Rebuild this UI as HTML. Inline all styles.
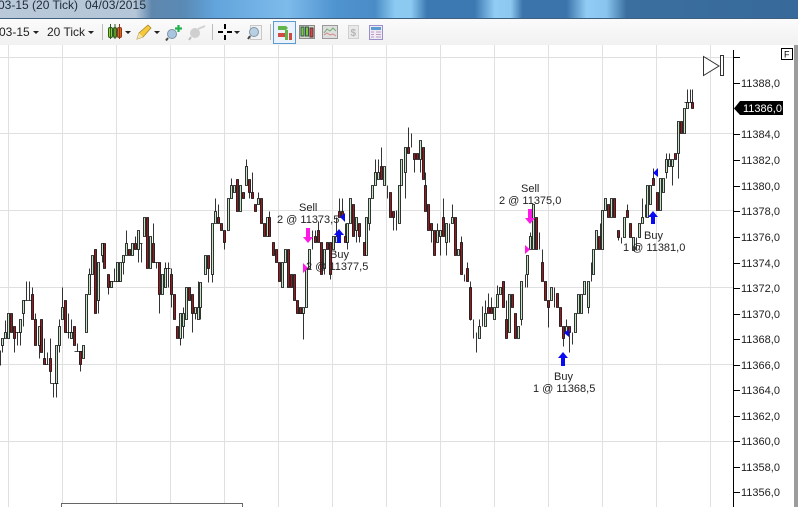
<!DOCTYPE html>
<html>
<head>
<meta charset="utf-8">
<style>
html,body{margin:0;padding:0;background:#fff}
body{width:798px;height:507px;overflow:hidden;position:relative;font-family:"Liberation Sans",sans-serif}
svg{position:absolute;left:0;top:0}
text{font-family:"Liberation Sans",sans-serif}
</style>
</head>
<body>
<svg width="798" height="507" viewBox="0 0 798 507">
<defs>
<linearGradient id="tb" x1="0" x2="1" y1="0" y2="0">
<stop offset="0" stop-color="#b9c9d9"/>
<stop offset=".17" stop-color="#b4c6d8"/>
<stop offset=".19" stop-color="#5f87ad"/>
<stop offset=".23" stop-color="#5a8ab5"/>
<stop offset=".27" stop-color="#62a4dc"/>
<stop offset=".36" stop-color="#7dbbea"/>
<stop offset=".42" stop-color="#4f93cf"/>
<stop offset=".47" stop-color="#4a8cc6"/>
<stop offset=".495" stop-color="#8ccaf2"/>
<stop offset=".515" stop-color="#8ccaf2"/>
<stop offset=".535" stop-color="#3c78b2"/>
<stop offset=".595" stop-color="#3c78b2"/>
<stop offset=".62" stop-color="#90ccf4"/>
<stop offset=".64" stop-color="#8cc8f0"/>
<stop offset=".655" stop-color="#3b74aa"/>
<stop offset=".71" stop-color="#3b74aa"/>
<stop offset=".735" stop-color="#90ccf4"/>
<stop offset=".76" stop-color="#88c4ee"/>
<stop offset=".785" stop-color="#3b6f9f"/>
<stop offset="1" stop-color="#376a9a"/>
</linearGradient>
<linearGradient id="tool" x1="0" x2="0" y1="0" y2="1">
<stop offset="0" stop-color="#fbfbfb"/><stop offset="1" stop-color="#f1f1f1"/>
</linearGradient>
</defs>

<rect width="798" height="18" fill="url(#tb)"/>
<rect y="18" width="798" height="1" fill="#3f5f7f"/>
<text x="-2" y="9" font-size="12" fill="#1e2a36" textLength="80">03-15 (20 Tick)</text>
<text x="85" y="9" font-size="12" fill="#1e2a36" textLength="61">04/03/2015</text>

<rect y="19" width="798" height="26" fill="url(#tool)"/>
<text x="-1" y="36" font-size="12" fill="#222">03-15</text>
<path d="M33 31h6l-3 3z M88 31h6l-3 3z M125 31h6l-3 3z M154 31h6l-3 3z M234 31h6l-3 3z" fill="#222"/>
<text x="47" y="36" font-size="12" fill="#222">20 Tick</text>
<path d="M102.500 24v16M212.500 24v16M270.500 24v16" stroke="#bcbcbc"/>

<!-- candle icon -->
<g stroke="#2d5a1e" stroke-width="1">
<rect x="108.500" y="27.500" width="4" height="10" rx="1.500" fill="#8fd13f"/>
<rect x="113.500" y="27.500" width="3" height="10" rx="1.500" fill="#8fd13f"/>
<rect x="117.500" y="27.500" width="4" height="10" rx="1.500" fill="#e0602a" stroke="#8a3a16"/>
<path d="M110.500 24v15M115 24v15" fill="none"/><path d="M119.500 24v15" stroke="#8a3a16"/>
</g>
<!-- pencil -->
<path d="M137 39l2-6 9-8 3 3-8 9z" fill="#f5c93a" stroke="#a8862a" stroke-width=".8"/>
<path d="M137 39l2-6 4 4z" fill="#f3e2b0"/>
<!-- magnifier plus -->
<circle cx="172" cy="34" r="4.500" fill="#a9c6de" stroke="#7c92a8"/>
<path d="M168 38l-2 2.500" stroke="#4a4a4a" stroke-width="2"/>
<path d="M178.500 25v7M175 28.500h7" stroke="#22b14c" stroke-width="2.200"/>
<!-- plug grey -->
<circle cx="195" cy="33" r="5" fill="#cfcfcf"/>
<path d="M191 37l-2 3" stroke="#bdbdbd" stroke-width="2"/>
<path d="M198 29l7-3" stroke="#d2d2d2" stroke-width="2"/>
<!-- crosshair -->
<path d="M218 32h5M227 32h5M225 24v5M225 35v5" stroke="#000" stroke-width="2"/>
<!-- magnifier box -->
<rect x="250.500" y="25.500" width="11" height="14" fill="#f2f2f2" stroke="#c8c8c8"/>
<circle cx="254" cy="32" r="4.500" fill="#b9d0e3" stroke="#7f94a8"/>
<path d="M250 36l-2 3" stroke="#444" stroke-width="2"/>
<!-- selected button -->
<rect x="273.500" y="21.500" width="22" height="22" fill="#eaf3fb" stroke="#5b9bd0"/>
<path d="M278 26h8l2 2-2 2h-8z" fill="#62b34a"/>
<path d="M278 33h7l2 2-2 2h-7z" fill="#cf4a44"/>
<rect x="285" y="30" width="3" height="10" fill="#62b34a"/>
<rect x="289" y="33" width="3" height="7" fill="#cf4a44"/>
<!-- candles 2 -->
<rect x="299.500" y="25.500" width="15" height="13" fill="#d9d9c9" stroke="#8a8a8a"/>
<rect x="301" y="27" width="3" height="9" fill="#7ec83f" stroke="#355"/>
<rect x="305.500" y="27" width="3" height="9" fill="#7ec83f" stroke="#355"/>
<rect x="310" y="28" width="3" height="9" fill="#d8484a" stroke="#533"/>
<!-- chart -->
<rect x="322.500" y="25.500" width="15" height="13" fill="#dedede" stroke="#9a9a9a"/>
<path d="M324 33l3-4 3 2 3-3 3 3" fill="none" stroke="#6fae6f"/>
<path d="M324 35l3-2 3 2 3-1 3 2" fill="none" stroke="#d08a8a"/>
<!-- $ doc -->
<rect x="348.500" y="25.500" width="10" height="13" fill="#e9e9e9" stroke="#cfcfcf"/>
<text x="350.500" y="36" font-size="10" font-weight="bold" fill="#b5b5b5">$</text>
<!-- window -->
<rect x="369.500" y="25.500" width="13" height="14" fill="#eeeaf6" stroke="#9a90c8"/>
<rect x="371" y="27" width="10" height="3" fill="#5d9bd0"/>
<path d="M371 32h3M371 34.500h3M371 37h3M376 32h5M376 34.500h5M376 37h5" stroke="#c09ac0"/>

<!-- grid -->
<g stroke="#e0e0e0">
<path d="M8.500 45V507M62.500 45V507M116.500 45V507M170.500 45V507M224.500 45V507M278.500 45V507M332.500 45V507M386.500 45V507M440.500 45V507M494.500 45V507M548.500 45V507M602.500 45V507M656.500 45V507M710.500 45V507"/>
<path d="M0 57.500H733M0 133.500H733M0 210.500H733M0 287.500H733M0 364.500H733M0 441.500H733"/>
</g>

<!-- candles -->
<g transform="translate(.5 .5)" stroke="#111" stroke-width=".85">
<path fill="none" d="M0 350V365M2 338V352M5 320V338M14 338V352M17 332V345M20 332V345M15 332h5M23 313V326M26 281V300M29 281V300M23 300h8M32 287V294M35 313V319M39 345V358M47 352V364M44 338V358M44 364h4M50 338V383M53 383V397M56 383V397M50 383h8M59 319V352M62 287V307M68 313V338M65 332h10M71 319V332M77 343V351M74 351h8M80 364V371M89 268V274M92 255V274M98 300V313M102 255V262M108 287V294M114 268V281M108 281h12M123 262V274M126 230V243M135 236V243M138 249V262M141 243V262M138 243h4M153 223V243M156 262V268M153 262h5M159 294V313M165 262V268M168 262V287M165 268h5M171 268V274M171 294V307M180 338V345M183 307V338M192 313V332M195 313V319M198 281V307M200 307V319M208 268V282M212 274V282M215 198V211M218 204V217M224 242V249M231 178V185M246 159V166M249 192V198M252 172V192M258 192V198M269 211V217M303 313V339M297 313h6M312 230V249M315 230V236M318 221V230M324 268V274M336 217V236M339 198V211M342 198V211M345 223V236M347 242V249M356 230V242M359 236V242M330 274V279M369 223V230M375 159V172M378 159V172M381 147V166M384 166V172M387 185V198M393 217V230M396 210V230M405 172V198M408 127V147M411 133V147M414 159V172M420 159V172M425 172V185M431 230V242M437 223V230M440 236V255M443 198V217M446 242V255M449 223V242M452 204V217M461 236V242M464 274V281M467 262V268M470 281V320M473 319V338M476 332V352M479 319V326M482 326V306M485 300V313M488 293V308M491 297V307M497 285V294M506 300V319M521 319V325M525 274V287M527 274V287M530 232V236M533 204V249M539 232V249M542 249V262M548 307V327M554 287V307M563 338V346M566 319V332M569 332V352M572 332V344M588 307V313M591 262V281M600 223V236M618 237V240M621 237V243M627 204V210M636 237V250M642 198V217M645 204V217M653 168V178M666 153V159M666 172V178M669 153V159M672 166V185M678 153V178M687 89V102M690 89V102M692 89V102M684 102h8"/>
<path fill="#c4e4c6" d="M1 338h2v7h-2zM4 332h2v6h-2zM7 313h2v25h-2zM19 319h2v13h-2zM22 300h2v13h-2zM38 326h2v19h-2zM55 345h2v38h-2zM58 326h2v19h-2zM61 307h2v12h-2zM70 332h2v6h-2zM82 345h2v13h-2zM85 294h2v38h-2zM88 274h2v20h-2zM91 255h2v19h-2zM97 262h2v38h-2zM101 243h2v12h-2zM110 281h2v6h-2zM116 262h2v19h-2zM119 262h2v19h-2zM122 255h2v7h-2zM125 243h2v12h-2zM131 243h2v12h-2zM137 230h2v19h-2zM143 217h2v19h-2zM149 236h2v32h-2zM161 274h2v20h-2zM164 268h2v19h-2zM179 313h2v25h-2zM182 313h2v13h-2zM185 287h2v32h-2zM194 307h2v6h-2zM197 307h2v12h-2zM199 282h2v25h-2zM204 255h2v19h-2zM211 223h2v51h-2zM214 211h2v12h-2zM227 198h2v32h-2zM230 185h2v13h-2zM233 185h2v7h-2zM239 185h2v26h-2zM245 166h2v19h-2zM257 198h2v6h-2zM266 217h2v19h-2zM281 262h2v25h-2zM284 249h2v13h-2zM302 307h2v6h-2zM305 268h2v39h-2zM308 249h2v19h-2zM323 249h2v19h-2zM332 236h2v13h-2zM335 236h2v6h-2zM346 223h2v19h-2zM349 198h2v25h-2zM355 217h2v13h-2zM365 217h2v38h-2zM368 198h2v25h-2zM371 185h2v13h-2zM374 172h2v13h-2zM377 172h2v7h-2zM383 166h2v19h-2zM398 185h2v38h-2zM400 159h2v26h-2zM404 147h2v25h-2zM419 140h2v19h-2zM436 230h2v12h-2zM439 230h2v6h-2zM445 223h2v19h-2zM451 217h2v6h-2zM457 249h2v6h-2zM478 326h2v12h-2zM484 313h2v13h-2zM493 307h2v12h-2zM496 294h2v13h-2zM499 287h2v7h-2zM508 294h2v38h-2zM517 326h2v12h-2zM520 281h2v38h-2zM526 255h2v19h-2zM529 236h2v13h-2zM532 204h2v45h-2zM550 287h2v13h-2zM565 326h2v6h-2zM574 313h2v19h-2zM577 294h2v19h-2zM580 294h2v19h-2zM583 281h2v13h-2zM587 281h2v26h-2zM592 249h2v25h-2zM595 230h2v19h-2zM601 210h2v39h-2zM604 198h2v12h-2zM610 198h2v19h-2zM623 217h2v20h-2zM632 237h2v13h-2zM638 223h2v14h-2zM641 217h2v6h-2zM646 185h2v32h-2zM649 185h2v19h-2zM659 178h2v32h-2zM662 178h2v14h-2zM665 159h2v13h-2zM668 159h2v7h-2zM671 159h2v7h-2zM677 121h2v32h-2zM683 108h2v25h-2zM686 102h2v6h-2z"/>
<path fill="#9a1a20" d="M10 313h2v19h-2zM13 326h2v12h-2zM31 294h2v25h-2zM34 319h2v26h-2zM40 319h2v33h-2zM43 358h2v6h-2zM49 358h2v13h-2zM64 300h2v32h-2zM73 326h2v19h-2zM79 351h2v13h-2zM94 249h2v64h-2zM103 243h2v25h-2zM107 274h2v13h-2zM128 249h2v6h-2zM134 243h2v6h-2zM146 217h2v51h-2zM152 243h2v19h-2zM158 262h2v32h-2zM170 274h2v20h-2zM173 294h2v25h-2zM176 326h2v12h-2zM188 287h2v13h-2zM191 294h2v19h-2zM207 255h2v13h-2zM217 217h2v6h-2zM220 223h2v7h-2zM223 230h2v12h-2zM236 179h2v32h-2zM242 192h2v6h-2zM248 179h2v13h-2zM251 192h2v6h-2zM254 204h2v7h-2zM260 198h2v25h-2zM263 223h2v13h-2zM268 217h2v19h-2zM272 242h2v13h-2zM275 249h2v13h-2zM278 262h2v19h-2zM287 249h2v38h-2zM290 274h2v13h-2zM293 274h2v26h-2zM296 300h2v13h-2zM299 307h2v6h-2zM314 236h2v6h-2zM317 230h2v12h-2zM320 242h2v32h-2zM326 242h2v7h-2zM329 242h2v32h-2zM338 211h2v6h-2zM341 211h2v6h-2zM344 236h2v6h-2zM352 204h2v32h-2zM358 223h2v13h-2zM363 242h2v13h-2zM380 166h2v13h-2zM389 192h2v25h-2zM392 211h2v6h-2zM407 147h2v6h-2zM413 153h2v6h-2zM416 153h2v6h-2zM422 147h2v32h-2zM424 185h2v26h-2zM427 204h2v26h-2zM430 223h2v7h-2zM433 230h2v25h-2zM442 217h2v19h-2zM454 217h2v38h-2zM460 242h2v32h-2zM466 268h2v13h-2zM469 287h2v32h-2zM487 307h2v6h-2zM490 307h2v6h-2zM502 281h2v26h-2zM505 319h2v19h-2zM511 294h2v13h-2zM514 313h2v25h-2zM535 217h2v32h-2zM541 262h2v19h-2zM544 281h2v19h-2zM547 300h2v7h-2zM556 293h2v14h-2zM559 307h2v19h-2zM562 326h2v12h-2zM568 326h2v6h-2zM598 236h2v13h-2zM607 204h2v13h-2zM613 198h2v19h-2zM617 230h2v7h-2zM626 210h2v7h-2zM629 223h2v14h-2zM652 178h2v7h-2zM656 192h2v18h-2zM674 153h2v6h-2zM680 121h2v12h-2zM691 102h2v6h-2z"/>
</g>

<!-- markers -->
<path fill="#ff19e6" d="M306 228h4v9h3l-5 6-5-6h3zM528 209h4v9h3l-5 6-5-6h3zM303 263l5 5-5 5zM525 245l5 4.500-5 4.500z"/>
<path fill="#0a0af0" d="M337 243v-8h-3l5-6 5 6h-3v8zM561 366v-8h-3l5-6 5 6h-3v8zM651 224v-7h-3l5-6 5 6h-3v7zM345 213v9l-5-5zM569 329v8l-5-4zM658 168v9l-5-4z"/>

<!-- marker labels -->
<g font-size="11" fill="#222">
<text x="299" y="211">Sell</text>
<text x="277" y="223">2 @ 11373,5</text>
<text x="330" y="258">Buy</text>
<text x="306" y="270">2 @ 11377,5</text>
<text x="521" y="192">Sell</text>
<text x="499" y="204">2 @ 11375,0</text>
<text x="554" y="380">Buy</text>
<text x="533" y="392">1 @ 11368,5</text>
<text x="644" y="239">Buy</text>
<text x="623" y="251">1 @ 11381,0</text>
</g>

<!-- play icon -->
<path d="M703.500 56.500V75.500L719 66z" fill="#fff" stroke="#333"/>
<rect x="720.500" y="55.500" width="3" height="20" fill="#fff" stroke="#333"/>

<!-- axis -->
<rect x="733" y="50" width="1" height="457" fill="#000"/>
<path stroke="#000" d="M733 57.500h7M733 83.500h7M733 134.500h7M733 160.500h7M733 186.500h7M733 211.500h7M733 237.500h7M733 263.500h7M733 288.500h7M733 314.500h7M733 339.500h7M733 365.500h7M733 390.500h7M733 416.500h7M733 441.500h7M733 467.500h7M733 492.500h7"/>
<g font-size="11" fill="#222">
<text x="741" y="87">11388,0</text>
<text x="741" y="138">11384,0</text>
<text x="741" y="164">11382,0</text>
<text x="741" y="190">11380,0</text>
<text x="741" y="215">11378,0</text>
<text x="741" y="241">11376,0</text>
<text x="741" y="267">11374,0</text>
<text x="741" y="292">11372,0</text>
<text x="741" y="318">11370,0</text>
<text x="741" y="343">11368,0</text>
<text x="741" y="369">11366,0</text>
<text x="741" y="394">11364,0</text>
<text x="741" y="420">11362,0</text>
<text x="741" y="445">11360,0</text>
<text x="741" y="471">11358,0</text>
<text x="741" y="496">11356,0</text>
</g>
<path d="M734 108.500L740 101H783V115H740z" fill="#000"/>
<text x="743" y="112" font-size="11" fill="#fff">11386,0</text>

<!-- F box + right edge -->
<rect x="794" y="45" width="4" height="462" fill="#9c9c9c"/>
<rect x="781.500" y="48.500" width="11" height="11" fill="#fff" stroke="#000"/>
<text x="784" y="57.500" font-size="9" fill="#000">F</text>

<!-- bottom box -->
<path d="M61.500 507V503.500H242.500V507" fill="#fff" stroke="#666"/>
</svg>
</body>
</html>
